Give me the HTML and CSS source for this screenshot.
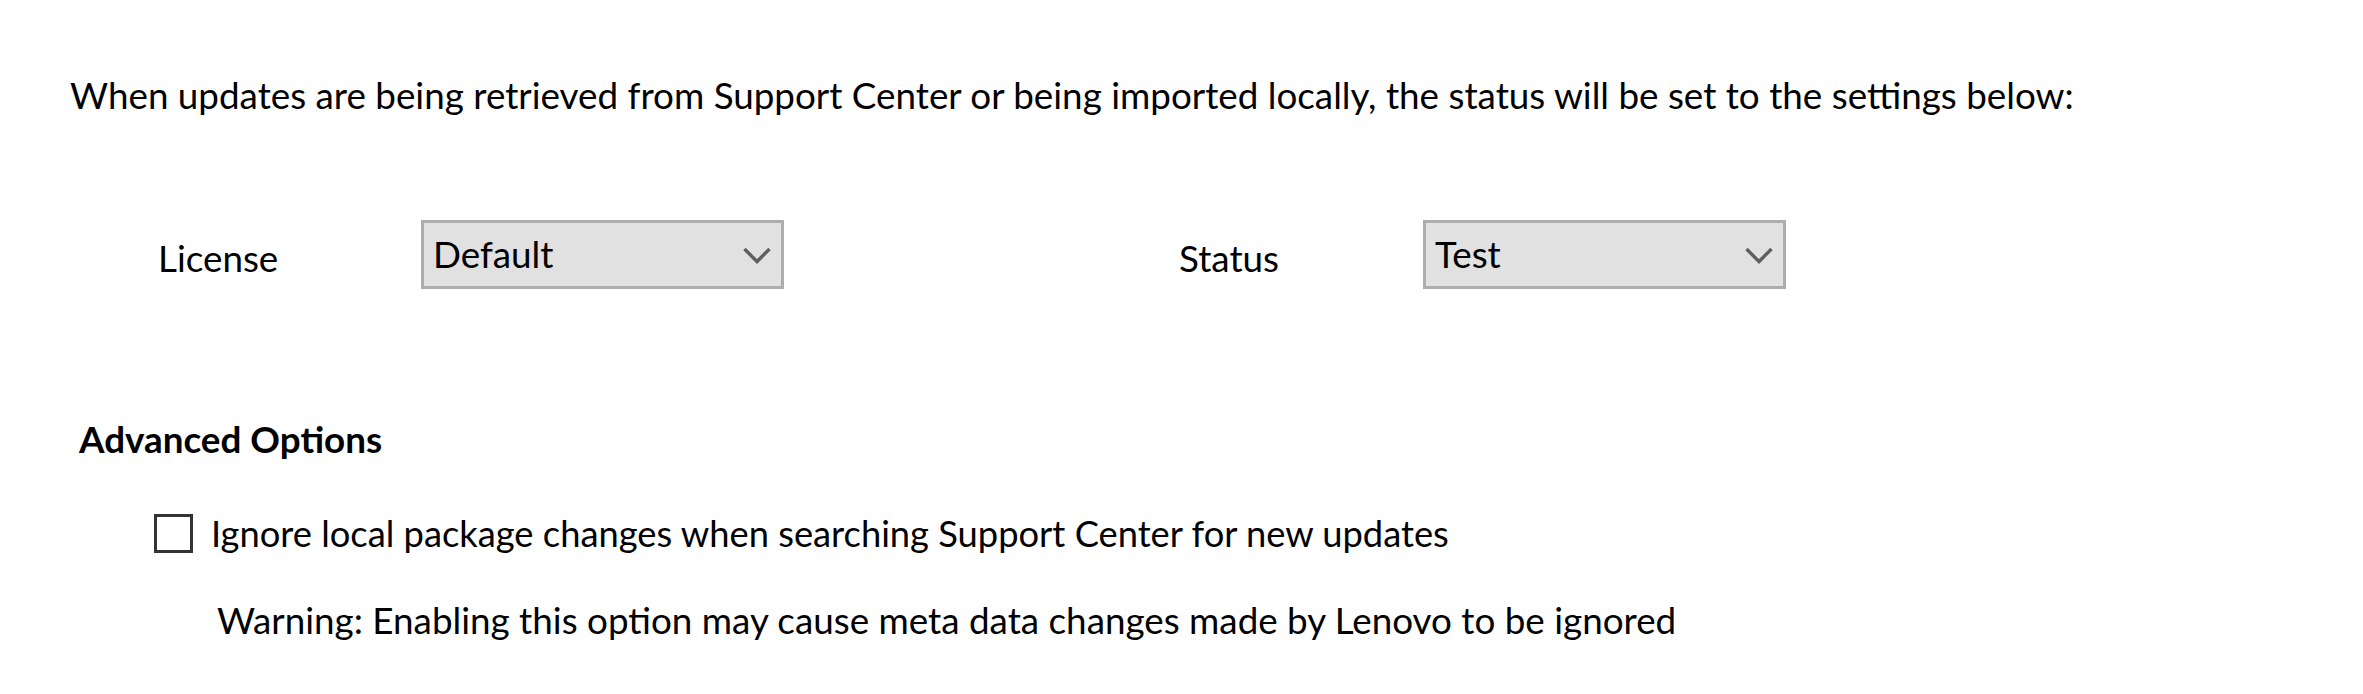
FILE: index.html
```html
<!DOCTYPE html>
<html lang="en">
<head>
<meta charset="utf-8">
<title>Update settings</title>
<link rel="stylesheet" href="styles.css">
</head>
<body>
<main class="panel">
  <p class="intro">When updates are being retrieved from Support Center or being imported locally, the status will be set to the settings below:</p>

  <div class="fields">
    <div class="field">
      <span class="field-label license-label">License</span>
      <div class="combo">
        <span class="combo-value">Default</span>
        <svg class="chevron" width="28" height="17" viewBox="0 0 28 17" aria-hidden="true">
          <polyline points="1.5,2 14,14.5 26.5,2" fill="none" stroke="#5f5f5f" stroke-width="3.4"/>
        </svg>
      </div>
    </div>
    <div class="field field-status">
      <span class="field-label status-label">Status</span>
      <div class="combo">
        <span class="combo-value">Test</span>
        <svg class="chevron" width="28" height="17" viewBox="0 0 28 17" aria-hidden="true">
          <polyline points="1.5,2 14,14.5 26.5,2" fill="none" stroke="#5f5f5f" stroke-width="3.4"/>
        </svg>
      </div>
    </div>
  </div>

  <h3 class="section-title">Advanced Options</h3>

  <label class="check-row">
    <span class="checkbox"></span>
    <span class="check-text">Ignore local package changes when searching Support Center for new updates</span>
  </label>

  <p class="warning">Warning: Enabling this option may cause meta data changes made by Lenovo to be ignored</p>
</main>
</body>
</html>
```
FILE: styles.css
```css
html, body {
  margin: 0;
  padding: 0;
  background: #ffffff;
}

body {
  font-family: "Lato", "Segoe UI", sans-serif;
  font-size: 36.8px;
  line-height: 44px;
  color: #000000;
  white-space: nowrap;
}

.panel {
  padding: 73px 0 0 70px;
}

.intro {
  margin: 0;
}

.fields {
  display: flex;
  align-items: flex-start;
  margin-top: 103px;
}

.field {
  display: flex;
  align-items: flex-start;
}

.license-label {
  margin-left: 88px;
  width: 263px;
}

.field-status {
  margin-left: 395px;
}

.status-label {
  width: 244px;
}

.field-label {
  padding-top: 4px;
  line-height: 69px;
}

.combo {
  box-sizing: border-box;
  width: 363px;
  height: 69px;
  border: 3px solid #adadad;
  background: #e1e1e1;
  display: flex;
  align-items: center;
  padding: 0 10px 0 9px;
}

.combo-value {
  line-height: 63px;
  flex: 1;
}

.chevron {
  display: block;
  flex: none;
  margin-top: 1px;
}

.section-title {
  margin: 124px 0 0 9px;
  font-size: 36.8px;
  font-weight: 700;
  line-height: 44px;
}

.check-row {
  display: flex;
  align-items: center;
  margin: 50px 0 0 84px;
}

.checkbox {
  box-sizing: border-box;
  width: 39px;
  height: 39px;
  border: 3px solid #333333;
  background: #ffffff;
  flex: none;
}

.check-text {
  margin-left: 18px;
  font-size: 36.3px;
}

.warning {
  margin: 43px 0 0 147px;
}
```
